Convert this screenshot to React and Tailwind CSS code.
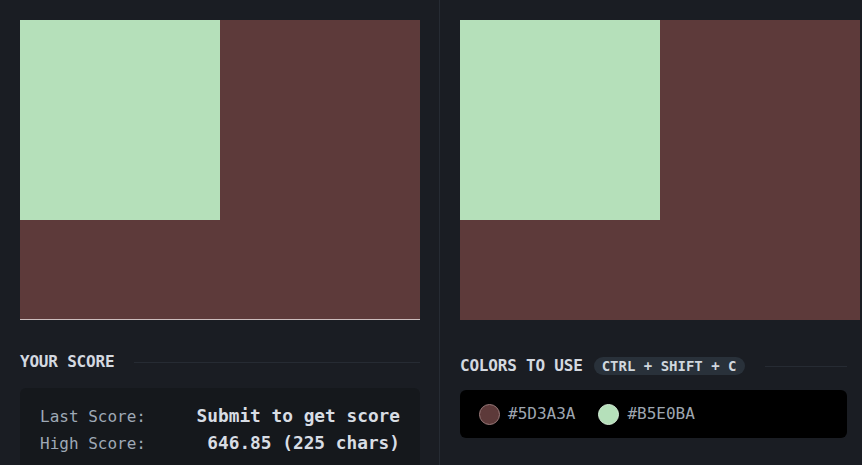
export default function App() {
  const font = { fontFamily: '"DejaVu Sans Mono", "Liberation Mono", monospace' };
  return (
    <div style={font} className="w-[862px] h-[465px] bg-[#1a1d23] flex overflow-hidden">
      <div className="w-[440px] shrink-0 border-r border-[#262b33] pl-5 pt-5 flex flex-col">
        <div className="w-[400px] h-[300px] shrink-0 bg-[#5d3a3a] relative border-b border-[#cdbdbd]">
          <div className="w-[200px] h-[200px] bg-[#b5e0ba]" />
        </div>
        <div className="w-[400px] mt-[30px] flex items-center h-6 shrink-0">
          <span className="text-[16px] font-bold text-[#d4d9e0] tracking-[-0.2px]">YOUR SCORE</span>
          <div className="flex-1 h-px bg-[#262b33] ml-5" />
        </div>
        <div className="w-[400px] mt-[14px] shrink-0 bg-[#15181c] rounded-md px-5 pt-[15px] pb-4">
          <div className="flex justify-between items-center h-[27px]">
            <span className="text-[16px] text-[#9fa9b6]">Last Score:</span>
            <span className="text-[17.8px] font-bold text-[#d8dde4]">Submit to get score</span>
          </div>
          <div className="flex justify-between items-center h-[27px]">
            <span className="text-[16px] text-[#9fa9b6]">High Score:</span>
            <span className="text-[17.8px] font-bold text-[#d8dde4]">646.85 (225 chars)</span>
          </div>
        </div>
      </div>
      <div className="flex-1 pl-5 pt-5 flex flex-col">
        <div className="w-[400px] h-[300px] shrink-0 bg-[#5d3a3a]">
          <div className="w-[200px] h-[200px] bg-[#b5e0ba]" />
        </div>
        <div className="w-[387px] mt-[34px] flex items-center h-6 shrink-0">
          <span className="text-[16px] font-bold text-[#d4d9e0] tracking-[-0.2px]">COLORS TO USE</span>
          <span className="ml-[11px] rounded-full bg-[#29313a] px-2 h-[18px] flex items-center text-[14px] font-bold text-[#d0d7de]">CTRL + SHIFT + C</span>
          <div className="flex-1 h-px bg-[#262b33] ml-5" />
        </div>
        <div className="w-[387px] mt-3 h-12 shrink-0 bg-black rounded-md px-[19px] flex items-center">
          <div className="flex items-center">
            <div className="w-[21px] h-[21px] rounded-full bg-[#5d3a3a] border border-[#9a7a7a]" />
            <span className="ml-2 text-[16px] text-[#9ea6b0]">#5D3A3A</span>
          </div>
          <div className="flex items-center ml-[23px]">
            <div className="w-[21px] h-[21px] rounded-full bg-[#b5e0ba] border border-[#d5eed8]" />
            <span className="ml-2 text-[16px] text-[#9ea6b0]">#B5E0BA</span>
          </div>
        </div>
      </div>
    </div>
  );
}
